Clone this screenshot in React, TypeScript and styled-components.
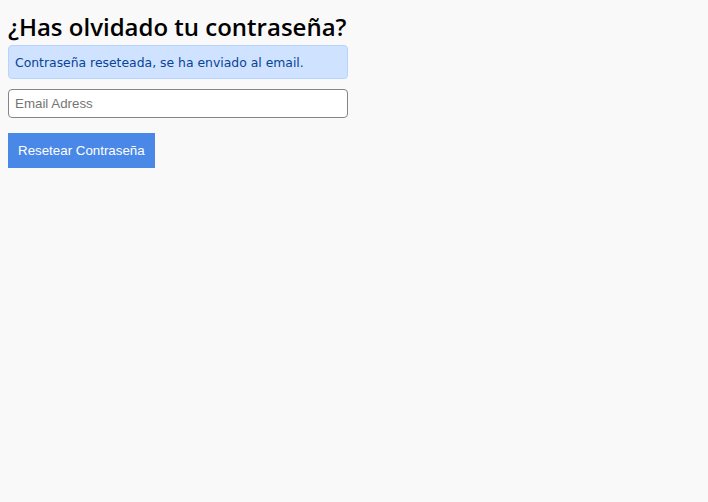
import React from "react";
import styled, { createGlobalStyle } from "styled-components";

const Global = createGlobalStyle`
  html, body { margin: 0; padding: 0; background: #f9f9f9; }
  body { padding: 8px; font-family: "DejaVu Sans", sans-serif; }
`;

const Form = styled.form`
  width: 340px;
  display: flex;
  flex-direction: column;
`;

const Title = styled.h2`
  margin: 4px 0 3px;
  font-family: "Open Sans", sans-serif;
  font-weight: 600;
  font-size: 24px;
  line-height: 30px;
  color: #000;
  white-space: nowrap;
`;

const Alert = styled.div`
  box-sizing: border-box;
  height: 34px;
  padding: 0 6px;
  display: flex;
  align-items: center;
  background: #cfe2ff;
  border: 1px solid #b6d4fe;
  border-radius: 4px;
  color: #084298;
  font-family: "DejaVu Sans", sans-serif;
  font-size: 12.4px;
`;

const Input = styled.input`
  box-sizing: border-box;
  margin-top: 10px;
  height: 29px;
  width: 340px;
  padding: 0 6px;
  border: 1px solid #858585;
  border-radius: 4px;
  background: #fff;
  font-family: "Liberation Sans", Arial, sans-serif;
  font-size: 13.333px;
  &::placeholder { color: #757575; }
`;

const Button = styled.button`
  align-self: flex-start;
  margin-top: 15px;
  height: 35px;
  padding: 0 10px;
  border: none;
  border-radius: 0;
  background: #4a88e8;
  color: #fff;
  font-family: "Liberation Sans", Arial, sans-serif;
  font-size: 13.333px;
`;

export default function App() {
  return (
    <>
      <Global />
      <Form onSubmit={(e) => e.preventDefault()}>
        <Title>¿Has olvidado tu contraseña?</Title>
        <Alert>Contraseña reseteada, se ha enviado al email.</Alert>
        <Input type="email" placeholder="Email Adress" />
        <Button type="submit">Resetear Contraseña</Button>
      </Form>
    </>
  );
}
